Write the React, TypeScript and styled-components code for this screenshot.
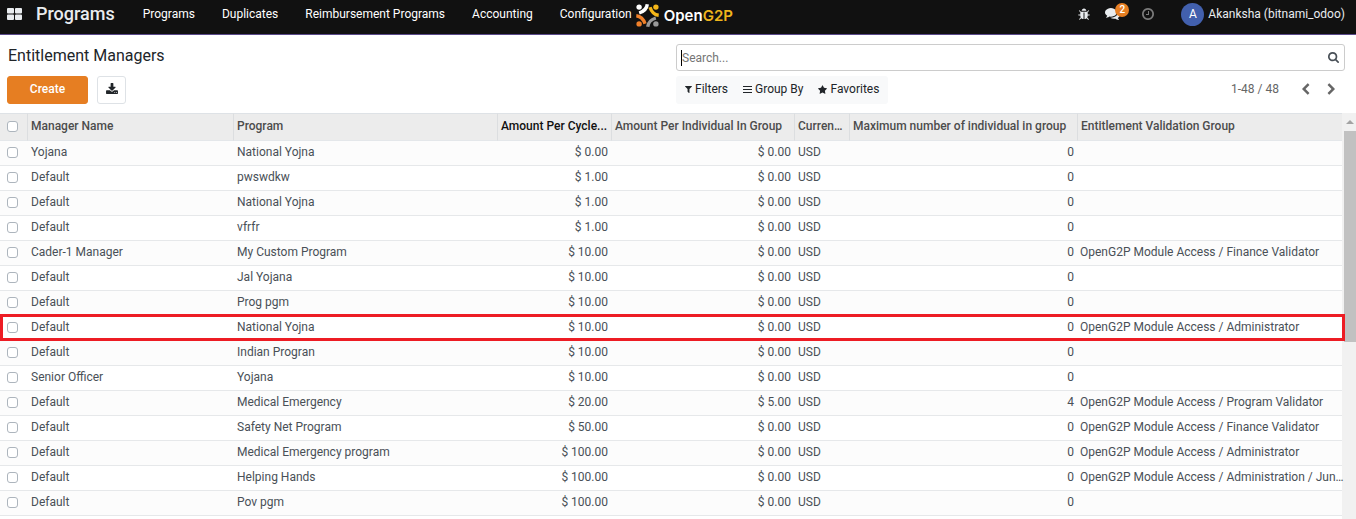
import React from "react";
import styled, { createGlobalStyle } from "styled-components";

const GlobalStyle = createGlobalStyle`
  *, *::before, *::after { box-sizing: border-box; }
  body {
    margin: 0;
    background: #fff;
    color: #495057;
    font: 400 12px/18px Roboto, "Liberation Sans", sans-serif;
  }
  button, input { font: inherit; color: inherit; }
`;

/* ---------- icons ---------- */

const icons = {
  bug: {
    box: "64 0 1664 1664",
    d: "M1696 960q0 26-19 45t-45 19h-224q0 171-67 290l208 209q19 19 19 45t-19 45q-18 19-45 19t-45-19l-198-197q-5 5-15 13t-42 28.5-65 36.5-82 29-97 13v-896h-128v896q-51 0-101.5-13.5t-87-33-66-39-43.5-32.5l-15-14-183 207q-20 21-48 21-24 0-43-16-19-18-20.5-44.5t15.5-46.5l202-227q-58-114-58-274h-224q-26 0-45-19t-19-45 19-45 45-19h224v-294l-173-173q-19-19-19-45t19-45 45-19 45 19l173 173h844l173-173q19-19 45-19t45 19 19 45-19 45l-173 173v294h224q26 0 45 19t19 45zm-480-576h-640q0-133 93.5-226.5t226.5-93.5 226.5 93.5 93.5 226.5z",
  },
  comments: {
    box: "0 0 1792 1408",
    d: "M1408 512q0 139-94 257t-256.5 186.5-353.5 68.5q-86 0-176-16-124 88-278 128-36 9-86 16h-3q-11 0-20.5-8t-11.5-21q-1-3-1-6.5t.5-6.5 2-6l2.5-5 3.5-5.5 4-5 4.5-5 4-4.5q5-6 23-25t26-29.5 22.5-29 25-38.5 20.5-44q-124-72-195-177t-71-224q0-139 94-257t256.5-186.5 353.5-68.5 353.5 68.5 256.5 186.5 94 257zm384 256q0 120-71 224.5t-195 176.5q10 24 20.5 44t25 38.5 22.5 29 26 29.5 23 25q1 1 4 4.5t4.5 5 4 5 3.5 5.5l2.5 5 2 6 .5 6.5-1 6.5q-3 14-13 22t-22 7q-50-7-86-16-154-40-278-128-90 16-176 16-271 0-472-132 58 4 88 4 161 0 309-45t264-129q125-92 192-212t67-254q0-77-23-152 129 71 204 178t75 230z",
  },
  clock: {
    box: "0 0 1536 1536",
    d: "M896 416v448q0 14-9 23t-23 9h-320q-14 0-23-9t-9-23v-64q0-14 9-23t23-9h224v-352q0-14 9-23t23-9h64q14 0 23 9t9 23zm416 352q0-148-73-273t-198-198-273-73-273 73-198 198-73 273 73 273 198 198 273 73 273-73 198-198 73-273zm224 0q0 209-103 385.5t-279.5 279.5-385.5 103-385.5-103-279.5-279.5-103-385.5 103-385.5 279.5-279.5 385.5-103 385.5 103 279.5 279.5 103 385.5z",
  },
  search: {
    box: "0 0 1664 1664",
    d: "M1152 704q0-185-131.5-316.5t-316.5-131.5-316.5 131.5-131.5 316.5 131.5 316.5 316.5 131.5 316.5-131.5 131.5-316.5zm512 832q0 52-38 90t-90 38q-54 0-90-38l-343-342q-179 124-399 124-143 0-273.5-55.5t-225-150-150-225-55.5-273.5 55.5-273.5 150-225 225-150 273.5-55.5 273.5 55.5 225 150 150 225 55.5 273.5q0 220-124 399l343 343q37 37 37 90z",
  },
  download: {
    box: "0 0 1664 1536",
    d: "M1280 1344q0-26-19-45t-45-19-45 19-19 45 19 45 45 19 45-19 19-45zm256 0q0-26-19-45t-45-19-45 19-19 45 19 45 45 19 45-19 19-45zm128-224v320q0 40-28 68t-68 28h-1472q-40 0-68-28t-28-68v-320q0-40 28-68t68-28h465l135 136q58 56 136 56t136-56l136-136h464q40 0 68 28t28 68zm-325-569q17 41-14 70l-448 448q-18 19-45 19t-45-19l-448-448q-31-29-14-70 17-39 59-39h256v-448q0-26 19-45t45-19h256q26 0 45 19t19 45v448h256q42 0 59 39z",
  },
  filter: {
    box: "0 0 1408 1408",
    d: "M1403 39q17 41-14 70l-493 493v742q0 42-39 59-13 5-25 5-27 0-45-19l-256-256q-19-19-19-45v-486l-493-493q-31-29-14-70 17-39 59-39h1280q42 0 59 39z",
  },
  bars: {
    box: "0 0 9 9",
    d: "M0 1h9v1h-9zM0 4h9v1h-9zM0 7h9v1h-9z",
  },
  star: {
    box: "0 0 1664 1600",
    d: "M1664 615q0 22-26 48l-363 354 86 500q1 7 1 20 0 21-10.5 35.5t-30.5 14.5q-19 0-40-12l-449-236-449 236q-22 12-40 12-21 0-31.5-14.5t-10.5-35.5q0-6 2-20l86-500-364-354q-25-27-25-48 0-37 56-46l502-73 225-455q19-41 49-41t49 41l225 455 502 73q56 9 56 46z",
  },
  left: {
    box: "0 0 1280 1664",
    d: "M1171 301l-531 531 531 531q19 19 19 45t-19 45l-166 166q-19 19-45 19t-45-19l-742-742q-19-19-19-45t19-45l742-742q19-19 45-19t45 19l166 166q19 19 19 45t-19 45z",
  },
  right: {
    box: "0 0 1280 1664",
    d: "M1107 877l-742 742q-19 19-45 19t-45-19l-166-166q-19-19-19-45t19-45l531-531-531-531q-19-19-19-45t19-45l166-166q19-19 45-19t45 19l742 742q19 19 19 45t-19 45z",
  },
  apps: {
    box: "0 0 15 12",
    d: "M1 0h5q1 0 1 1v3.500q0 1-1 1h-5q-1 0-1-1v-3.500q0-1 1-1zM9 0h5q1 0 1 1v3.500q0 1-1 1h-5q-1 0-1-1v-3.500q0-1 1-1zM1 6.500h5q1 0 1 1v3.500q0 1-1 1h-5q-1 0-1-1v-3.500q0-1 1-1zM9 6.500h5q1 0 1 1v3.500q0 1-1 1h-5q-1 0-1-1v-3.500q0-1 1-1z",
  },
};

const Svg = styled.svg`
  display: block;
  flex: none;
  fill: currentColor;
`;

function Icon({ name, w, h = w }: { name: keyof typeof icons; w: number; h?: number }) {
  return (
    <Svg width={w} height={h} viewBox={icons[name].box} aria-hidden="true">
      <path d={icons[name].d} />
    </Svg>
  );
}

const logoArms = ["#fff", "#f5b719", "#999", "#f0802a"];

function LogoMark() {
  return (
    <Svg width="23" height="23" viewBox="0 0 23 23" aria-hidden="true">
      {logoArms.map((color, i) => (
        <g key={color} transform={`rotate(${i * 90} 11.5 11.5)`}>
          <circle cx="3.100" cy="3.100" r="2.700" fill={color} />
          <path d="M11.300 0.300Q10.600 6.600 3.200 9" fill="none" stroke={color} strokeWidth="3.400" />
        </g>
      ))}
    </Svg>
  );
}

/* ---------- top bar ---------- */

const NavBar = styled.header`
  display: flex;
  align-items: center;
  flex: none;
  height: 35px;
  padding: 0 11px 6px 7px;
  background: #111;
  border-bottom: 1px solid #5a4a8a;
  color: #e9ecef;
`;

const PlainButton = styled.button`
  display: flex;
  align-items: center;
  padding: 0;
  border: 0;
  background: none;
  cursor: pointer;
`;

const Brand = styled.a`
  margin: 0 28px 0 14px;
  color: inherit;
  font-size: 18px;
  font-weight: 500;
  text-decoration: none;
`;

const Menu = styled.nav`
  display: flex;
  gap: 27px;
`;

const MenuLink = styled.a`
  color: #fff;
  text-decoration: none;
  white-space: nowrap;
`;

const Logo = styled.div`
  display: flex;
  align-items: center;
  gap: 5px;
  margin-left: 4px;
  padding-top: 2px;
  color: #fff;
  font: 600 15px/23px Inter, sans-serif;
`;

const LogoAccent = styled.span`
  color: #f0b51c;
`;

const Systray = styled.div`
  display: flex;
  align-items: center;
  margin-left: auto;
`;

const TrayButton = styled(PlainButton)<{ $gap: number; $muted?: boolean }>`
  position: relative;
  margin-right: ${(p) => p.$gap}px;
  color: ${(p) => (p.$muted ? "#7c7c7c" : "#e9ecef")};
`;

const Badge = styled.span`
  position: absolute;
  left: 10px;
  top: -5px;
  width: 14px;
  height: 14px;
  border-radius: 7px;
  background: #e67e22;
  color: #fff;
  font-size: 10px;
  font-weight: 500;
  line-height: 14px;
  text-align: center;
`;

const UserButton = styled(PlainButton)`
  gap: 4px;
  white-space: nowrap;
`;

const Avatar = styled.span`
  width: 23px;
  height: 23px;
  border-radius: 50%;
  background: #4260ad;
  color: #fff;
  line-height: 23px;
  text-align: center;
`;

/* ---------- control panel ---------- */

const ControlPanel = styled.section`
  display: grid;
  grid-template-columns: 1fr 1fr;
  grid-template-rows: 27px 28px;
  row-gap: 5px;
  flex: none;
  padding: 9px 11px 9px 7px;
`;

const Title = styled.h1`
  margin: 0;
  padding-left: 1px;
  color: #212529;
  font-size: 16px;
  font-weight: 400;
  line-height: 24px;
`;

const SearchBox = styled.label`
  display: flex;
  align-items: center;
  padding: 0 5px 0 4px;
  border: 1px solid #ccc;
  border-radius: 3px;
`;

const SearchInput = styled.input`
  flex: 1;
  min-width: 0;
  height: 16px;
  padding: 0;
  border: 0;
  border-left: 1px solid #000;
  outline: 0;
  background: none;

  &::placeholder { color: #757575; opacity: 1; }
`;

const Actions = styled.div`
  display: flex;
  gap: 9px;
`;

const CreateButton = styled.button`
  width: 81px;
  padding: 0 0 2px;
  border: 1px solid #e67e22;
  border-radius: 3px;
  background: #e67e22;
  color: #fff;
  font-weight: 500;
`;

const ExportButton = styled.button`
  display: flex;
  align-items: center;
  justify-content: center;
  width: 29px;
  padding: 0 0 4px;
  border: 1px solid #dee2e6;
  border-radius: 3px;
  background: #fff;
  color: #212529;
`;

const SearchTools = styled.div`
  display: flex;
  align-items: stretch;
  justify-content: space-between;
`;

const FilterGroup = styled.div`
  display: flex;
  gap: 15px;
  padding: 0 9px 2px;
  border-radius: 3px;
  background: #f8f9fa;
`;

const FilterButton = styled(PlainButton)`
  gap: 3px;
  color: #212529;
`;

const Pager = styled.div`
  display: flex;
  align-items: center;
  padding: 0 9px 2px 0;
  color: #666;
`;

const PagerRange = styled.span`
  margin-right: 22px;
`;

const PagerButton = styled(PlainButton)`
  & + & { margin-left: 17px; }
`;

/* ---------- list ---------- */

const ListView = styled.main`
  display: flex;
  flex: 1;
  min-height: 0;
  overflow: hidden;
  align-items: stretch;
`;

const TableArea = styled.div`
  position: relative;
  z-index: 1;
  flex: 1;
  min-width: 0;
`;

const Table = styled.table`
  width: 100%;
  table-layout: fixed;
  border-collapse: separate;
  border-spacing: 0;
`;

const Col = styled.col<{ $w?: number }>`
  width: ${(p) => (p.$w ? `${p.$w}px` : "auto")};
`;

const HeadCell = styled.th<{ $sorted?: boolean }>`
  height: 28px;
  padding: 0 3px 2px;
  overflow: hidden;
  border-top: 1px solid #dee2e6;
  border-bottom: 1px solid #e4e7ea;
  background: #ececec;
  color: ${(p) => (p.$sorted ? "#111" : "#4c4c4c")};
  font-weight: 500;
  text-align: left;
  text-overflow: ellipsis;
  white-space: nowrap;

  & + & { border-left: 1px solid #dcdee0; }
  &:first-child { padding: 0 0 2px 7px; }
`;

const Row = styled.tr`
  position: relative;
  background: #fff;

  &:nth-child(odd) { background: #fcfcfc; }
`;

const Cell = styled.td<{ $right?: boolean }>`
  height: 25px;
  padding: 0 3px 2px 4px;
  overflow: hidden;
  border-bottom: 1px solid #e6e8ea;
  text-align: ${(p) => (p.$right ? "right" : "left")};
  text-overflow: ellipsis;
  white-space: nowrap;

  &:first-child { padding: 0 0 2px 7px; }
  &:last-child { padding: 0 0 2px 3px; overflow: visible; }
`;

/* Frame laid over the whole highlighted row, reaching onto the scroll bar. */
const RowFrame = styled.span`
  position: absolute;
  inset: -2px -3px 0 0;
  border: 3px solid #ed1c24;
  pointer-events: none;
`;

const CheckBox = styled.input`
  display: block;
  width: 11px;
  height: 11px;
  margin: 0;
  appearance: none;
  border: 1px solid #adb5bd;
  border-radius: 3px;
  background: #fff;

  &:checked { background: #e67e22; }
`;

const ScrollTrack = styled.div`
  flex: none;
  width: 14px;
  padding-left: 2px;
  background: #f1f1f1;
`;

const ScrollArrow = styled.div`
  display: flex;
  align-items: center;
  justify-content: center;
  height: 18px;
  color: #a3a3a3;
`;

const ScrollThumb = styled.div`
  height: 211px;
  background: #c1c1c1;
`;

const Page = styled.div`
  display: flex;
  flex-direction: column;
  height: 100vh;
`;

const menu = ["Programs", "Duplicates", "Reimbursement Programs", "Accounting", "Configuration"];

const columns: { label: string; width?: number; sorted?: boolean }[] = [
  { label: "Manager Name", width: 206 },
  { label: "Program", width: 264 },
  { label: "Amount Per Cycle...", width: 114, sorted: true },
  { label: "Amount Per Individual In Group", width: 183 },
  { label: "Currency", width: 55 },
  { label: "Maximum number of individual in group", width: 228 },
  { label: "Entitlement Validation Group" },
];

type Manager = [name: string, program: string, cycle: string, group: string, max: number, validation?: string];

const access = "OpenG2P Module Access / ";

const managers: Manager[] = [
  ["Yojana", "National Yojna", "0.00", "0.00", 0],
  ["Default", "pwswdkw", "1.00", "0.00", 0],
  ["Default", "National Yojna", "1.00", "0.00", 0],
  ["Default", "vfrfr", "1.00", "0.00", 0],
  ["Cader-1 Manager", "My Custom Program", "10.00", "0.00", 0, "Finance Validator"],
  ["Default", "Jal Yojana", "10.00", "0.00", 0],
  ["Default", "Prog pgm", "10.00", "0.00", 0],
  ["Default", "National Yojna", "10.00", "0.00", 0, "Administrator"],
  ["Default", "Indian Progran", "10.00", "0.00", 0],
  ["Senior Officer", "Yojana", "10.00", "0.00", 0],
  ["Default", "Medical Emergency", "20.00", "5.00", 4, "Program Validator"],
  ["Default", "Safety Net Program", "50.00", "0.00", 0, "Finance Validator"],
  ["Default", "Medical Emergency program", "100.00", "0.00", 0, "Administrator"],
  ["Default", "Helping Hands", "100.00", "0.00", 0, "Administration / Jun…"],
  ["Default", "Pov pgm", "100.00", "0.00", 0],
];

const markedRow = 7;

export default function App() {
  return (
    <Page>
      <GlobalStyle />
      <NavBar>
        <PlainButton aria-label="Applications"><Icon name="apps" w={15} h={12} /></PlainButton>
        <Brand href="#">Programs</Brand>
        <Menu>
          {menu.map((item) => <MenuLink key={item} href="#">{item}</MenuLink>)}
        </Menu>
        <Logo>
          <LogoMark />
          <span>Open<LogoAccent>G2P</LogoAccent></span>
        </Logo>
        <Systray>
          <TrayButton $gap={15} aria-label="Debug"><Icon name="bug" w={12} /></TrayButton>
          <TrayButton $gap={22} aria-label="Messages">
            <Icon name="comments" w={15} h={12} />
            <Badge>2</Badge>
          </TrayButton>
          <TrayButton $gap={27} $muted aria-label="Activities"><Icon name="clock" w={12} /></TrayButton>
          <UserButton><Avatar>A</Avatar>Akanksha (bitnami_odoo)</UserButton>
        </Systray>
      </NavBar>

      <ControlPanel>
        <Title>Entitlement Managers</Title>
        <SearchBox>
          <SearchInput type="text" placeholder="Search..." aria-label="Search" />
          <Icon name="search" w={11} />
        </SearchBox>
        <Actions>
          <CreateButton>Create</CreateButton>
          <ExportButton aria-label="Export all"><Icon name="download" w={12} h={11} /></ExportButton>
        </Actions>
        <SearchTools>
          <FilterGroup>
            <FilterButton><Icon name="filter" w={7} />Filters</FilterButton>
            <FilterButton><Icon name="bars" w={9} />Group By</FilterButton>
            <FilterButton><Icon name="star" w={9} />Favorites</FilterButton>
          </FilterGroup>
          <Pager>
            <PagerRange>1-48 / 48</PagerRange>
            <PagerButton aria-label="Previous"><Icon name="left" w={9} h={12} /></PagerButton>
            <PagerButton aria-label="Next"><Icon name="right" w={9} h={12} /></PagerButton>
          </Pager>
        </SearchTools>
      </ControlPanel>

      <ListView>
        <TableArea>
          <Table>
            <colgroup>
              <Col $w={27} />
              {columns.map((c) => <Col key={c.label} $w={c.width} />)}
            </colgroup>
            <thead>
              <tr>
                <HeadCell><CheckBox type="checkbox" aria-label="Select all" /></HeadCell>
                {columns.map((c) => <HeadCell key={c.label} $sorted={c.sorted}>{c.label}</HeadCell>)}
              </tr>
            </thead>
            <tbody>
              {managers.map(([name, program, cycle, group, max, validation], i) => (
                <Row key={i}>
                  <Cell>
                    <CheckBox type="checkbox" aria-label={`Select ${name}`} />
                    {i === markedRow && <RowFrame />}
                  </Cell>
                  <Cell>{name}</Cell>
                  <Cell>{program}</Cell>
                  <Cell $right>$ {cycle}</Cell>
                  <Cell $right>$ {group}</Cell>
                  <Cell>USD</Cell>
                  <Cell $right>{max}</Cell>
                  <Cell>{validation && access + validation}</Cell>
                </Row>
              ))}
            </tbody>
          </Table>
        </TableArea>
        <ScrollTrack>
          <ScrollArrow>
            <Svg width="8" height="4" viewBox="0 0 8 4" aria-hidden="true"><path d="M0 4L4 0L8 4z" /></Svg>
          </ScrollArrow>
          <ScrollThumb />
        </ScrollTrack>
      </ListView>
    </Page>
  );
}
